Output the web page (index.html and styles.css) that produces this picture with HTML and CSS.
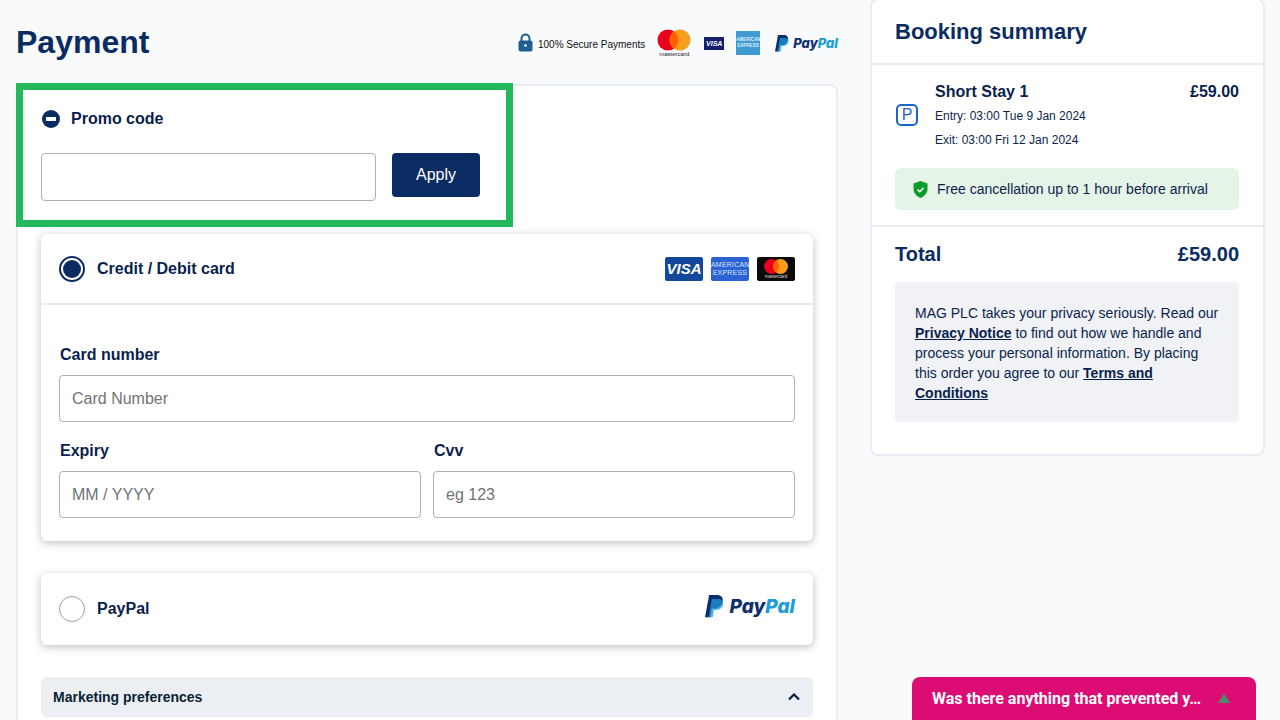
FILE: index.html
```html
<!DOCTYPE html>
<html lang="en">
<head>
    <meta charset="UTF-8">
    <meta name="viewport" content="width=device-width, initial-scale=1.0">
    <title>Payment</title>
    <link rel="stylesheet" href="styles.css">
</head>
<body>
    <div class="page">
        <main class="main-col">
            <div class="pay-header">
                <h1>Payment</h1>
                <div class="secure">
                    <svg class="lock" width="15" height="19" viewBox="0 0 15 19">
                        <path d="M3.500 9V5.500a4 4 0 0 1 8 0V9" fill="none" stroke="#1f5f8f" stroke-width="2"/>
                        <rect x="0.5" y="7.500" width="14" height="11" rx="2" fill="#1f5f8f"/>
                        <circle cx="7.500" cy="12.500" r="1.300" fill="#fff"/>
                    </svg>
                    <span class="secure-text">100% Secure Payments</span>
                    <div class="mc-small">
                        <svg width="34" height="22" viewBox="0 0 34 22">
                            <circle cx="11" cy="11" r="10.500" fill="#eb001b"/>
                            <circle cx="23" cy="11" r="10.500" fill="#f79e1b"/>
                            <path d="M17 2.400a10.500 10.500 0 0 1 0 17.200a10.500 10.500 0 0 1 0-17.200z" fill="#ff5f00"/>
                        </svg>
                        <span>mastercard</span>
                    </div>
                    <span class="visa-small">VISA</span>
                    <span class="amex-small">AMERICAN<br>EXPRESS</span>
                    <div class="paypal-small">
                        <svg width="14" height="17" viewBox="0 0 14 17">
                            <path d="M3 0h5.500C12 0 13.600 2 13 5c-.6 3.200-3 5-6 5H5l-1 6.500H0z" fill="#0a2d6e"/>
                            <path d="M5 3h5c2.500 0 3.800 1.600 3.300 4-.5 2.700-2.600 4-5 4H6.500l-.8 5.500H2.700z" fill="#1c9bd8" opacity=".75"/>
                        </svg>
                        <span class="pp-pay">Pay</span><span class="pp-pal">Pal</span>
                    </div>
                </div>
            </div>

            <section class="pay-card">
                <div class="promo">
                    <div class="promo-title">
                        <span class="minus-icon"></span>
                        <span>Promo code</span>
                    </div>
                    <div class="promo-row">
                        <input class="text-input promo-input" type="text">
                        <button class="apply-btn">Apply</button>
                    </div>
                </div>

                <div class="option">
                    <div class="option-head bordered">
                        <span class="radio checked"></span>
                        <span class="option-name">Credit / Debit card</span>
                        <div class="card-logos">
                            <span class="logo-visa">VISA</span>
                            <span class="logo-amex">AMERICAN<br>EXPRESS</span>
                            <span class="logo-mc">
                                <svg width="26" height="15" viewBox="0 0 26 15">
                                    <circle cx="8.500" cy="7.500" r="7.500" fill="#eb001b"/>
                                    <circle cx="17.500" cy="7.500" r="7.500" fill="#f79e1b"/>
                                    <path d="M13 1.500a7.500 7.500 0 0 1 0 12a7.500 7.500 0 0 1 0-12z" fill="#ff5f00"/>
                                </svg>
                                <span>mastercard</span>
                            </span>
                        </div>
                    </div>
                    <div class="option-body">
                        <label class="field-label">Card number</label>
                        <input class="text-input" type="text" placeholder="Card Number">
                        <div class="field-row">
                            <div class="field">
                                <label class="field-label">Expiry</label>
                                <input class="text-input" type="text" placeholder="MM / YYYY">
                            </div>
                            <div class="field">
                                <label class="field-label">Cvv</label>
                                <input class="text-input" type="text" placeholder="eg 123">
                            </div>
                        </div>
                    </div>
                </div>

                <div class="option paypal-option">
                    <div class="option-head">
                        <span class="radio"></span>
                        <span class="option-name">PayPal</span>
                        <div class="paypal-big">
                            <svg width="19" height="23" viewBox="0 0 14 17">
                                <path d="M3 0h5.500C12 0 13.600 2 13 5c-.6 3.200-3 5-6 5H5l-1 6.500H0z" fill="#0a2d6e"/>
                                <path d="M5 3h5c2.500 0 3.800 1.600 3.300 4-.5 2.700-2.600 4-5 4H6.500l-.8 5.500H2.700z" fill="#1c9bd8" opacity=".75"/>
                            </svg>
                            <span class="pp-pay">Pay</span><span class="pp-pal">Pal</span>
                        </div>
                    </div>
                </div>

                <div class="marketing">
                    <span>Marketing preferences</span>
                    <svg width="12" height="8" viewBox="0 0 12 8">
                        <path d="M1 6.500l5-5 5 5" fill="none" stroke="#0a1f44" stroke-width="2.200"/>
                    </svg>
                </div>
            </section>
        </main>

        <aside class="summary">
            <h2>Booking summary</h2>
            <div class="summary-item">
                <div class="stay">
                    <span class="p-icon">P</span>
                    <div class="stay-info">
                        <div class="stay-top">
                            <strong>Short Stay 1</strong>
                            <strong>£59.00</strong>
                        </div>
                        <p>Entry: 03:00 Tue 9 Jan 2024</p>
                        <p>Exit: 03:00 Fri 12 Jan 2024</p>
                    </div>
                </div>
                <div class="cancel-note">
                    <svg width="15" height="17" viewBox="0 0 15 17">
                        <path d="M7.500 0l7 2.500v5.500c0 4-3 7.200-7 9c-4-1.800-7-5-7-9V2.500z" fill="#0d9b2c"/>
                        <path d="M4.500 8.500l2.200 2.200 3.800-3.800" fill="none" stroke="#fff" stroke-width="1.500"/>
                    </svg>
                    <span>Free cancellation up to 1 hour before arrival</span>
                </div>
            </div>
            <div class="summary-total">
                <div class="total-row">
                    <span>Total</span>
                    <span>£59.00</span>
                </div>
                <div class="privacy">
                    <p>MAG PLC takes your privacy seriously. Read our</p>
                    <p><a href="#">Privacy Notice</a> to find out how we handle and</p>
                    <p>process your personal information. By placing</p>
                    <p>this order you agree to our <a href="#">Terms and</a></p>
                    <p><a href="#">Conditions</a></p>
                </div>
            </div>
        </aside>
    </div>

    <div class="feedback">
        <span>Was there anything that prevented y…</span>
        <span class="feedback-arrow"></span>
    </div>
</body>
</html>
```

FILE: styles.css
```css
* {
    box-sizing: border-box;
}
html, body {
    height: 720px;
    overflow: hidden;
}
body {
    margin: 0;
    background-color: #f8fafc;
    color: #0a1f4d;
    font-family: "Liberation Sans", Arial, sans-serif;
}
.page {
    display: flex;
    align-items: flex-start;
    gap: 32px;
    padding-left: 16px;
}
.main-col {
    width: 822px;
    flex-shrink: 0;
}
.pay-header {
    display: flex;
    justify-content: space-between;
    align-items: center;
    height: 84px;
}
h1 {
    margin: 0;
    font-size: 32px;
    font-weight: 700;
    color: #0b2c63;
}
.secure {
    display: flex;
    align-items: center;
    padding-top: 2px;
}
.secure-text {
    margin: 3px 0 0 5px;
    font-size: 10px;
    color: #111;
}
.lock {
    margin-bottom: 2px;
}
.mc-small {
    display: flex;
    flex-direction: column;
    align-items: center;
    margin-left: 12px;
    color: #222;
    font-size: 6px;
    line-height: 6px;
}
.visa-small {
    margin-left: 13px;
    width: 20px;
    height: 13px;
    background-color: #14206e;
    color: #fff;
    font-size: 7px;
    font-weight: 700;
    font-style: italic;
    line-height: 13px;
    text-align: center;
}
.amex-small {
    margin-left: 12px;
    width: 24px;
    height: 24px;
    padding-top: 6px;
    background-color: #3f9bd1;
    color: #d9eef8;
    font-size: 4.500px;
    font-weight: 700;
    line-height: 6px;
    text-align: center;
}
.paypal-small {
    display: flex;
    align-items: center;
    margin-left: 15px;
    font-family: Inter, sans-serif;
    font-size: 13px;
    font-weight: 800;
    font-style: italic;
}
.paypal-small svg {
    margin-right: 4px;
}
.pp-pay {
    color: #0f2f6e;
}
.pp-pal {
    color: #1c9bd8;
}

.pay-card {
    height: 636px;
    background-color: #fff;
    border: 2px solid #e8edf4;
    border-bottom: none;
    border-radius: 8px 8px 0 0;
    padding: 0 23px;
}
.promo {
    width: 497px;
    height: 144px;
    margin: -3px 0 0 -25px;
    padding: 19px 0 0 18px;
    border: 7px solid #22b95c;
    background-color: #fff;
}
.promo-title {
    display: flex;
    align-items: center;
    gap: 11px;
    padding-left: 1px;
    font-size: 16px;
    font-weight: 700;
    line-height: 19px;
}
.minus-icon {
    position: relative;
    width: 18px;
    height: 18px;
    border-radius: 50%;
    background-color: #0b2c63;
}
.minus-icon::after {
    content: "";
    position: absolute;
    left: 4px;
    top: 7px;
    width: 10px;
    height: 4px;
    background-color: #fff;
}
.promo-row {
    display: flex;
    align-items: flex-start;
    gap: 16px;
    margin-top: 25px;
}
.text-input {
    display: block;
    width: 100%;
    height: 47px;
    padding: 1px 12px 0;
    border: 1px solid #adb0b4;
    border-radius: 4px;
    background-color: #fff;
    font-family: inherit;
    font-size: 16px;
}
.text-input::placeholder {
    color: #6f7378;
    opacity: 1;
}
.promo-input {
    width: 335px;
    height: 48px;
}
.apply-btn {
    width: 88px;
    height: 44px;
    border: none;
    border-radius: 4px;
    background-color: #0b2c63;
    color: #fff;
    font-family: inherit;
    font-size: 16px;
}

.option {
    margin-top: 7px;
    height: 307px;
    background-color: #fff;
    border-radius: 6px;
    box-shadow: 0 2px 8px rgba(0, 0, 0, 0.25);
}
.option-head {
    display: flex;
    align-items: center;
    height: 71px;
    padding: 0 18px;
}
.option-head.bordered {
    border-bottom: 2px solid #e8eaed;
}
.radio {
    width: 26px;
    height: 26px;
    flex-shrink: 0;
    border: 1px solid #9a9ea3;
    border-radius: 50%;
    background-color: #fff;
}
.radio.checked {
    border: 2px solid #0b2c63;
    padding: 2px;
    background-color: #0b2c63;
    background-clip: content-box;
}
.option-name {
    margin-left: 12px;
    font-size: 16px;
    font-weight: 700;
}
.card-logos {
    display: flex;
    gap: 8px;
    margin-left: auto;
}
.logo-visa,
.logo-amex,
.logo-mc {
    width: 38px;
    height: 24px;
    border-radius: 2px;
    text-align: center;
}
.logo-visa {
    background-color: #12479c;
    color: #fff;
    font-size: 15px;
    font-weight: 700;
    font-style: italic;
    line-height: 24px;
}
.logo-amex {
    padding-top: 4px;
    background-color: #2b62d4;
    color: #dbe6fb;
    font-size: 7px;
    letter-spacing: 0.2px;
    line-height: 8px;
}
.logo-mc {
    display: flex;
    flex-direction: column;
    align-items: center;
    padding-top: 2px;
    background-color: #0a0a0a;
    color: #ddd;
    font-size: 4.500px;
    line-height: 5px;
}
.option-body {
    padding: 40px 18px 0;
}
.field-label {
    display: block;
    margin: 0 0 11px 1px;
    font-size: 16px;
    font-weight: 700;
    line-height: 19px;
}
.field-row {
    display: flex;
    gap: 12px;
    margin-top: 19px;
}
.field {
    flex: 1;
}
.paypal-option {
    margin-top: 32px;
    height: 72px;
}
.paypal-option .option-head {
    height: 72px;
}
.paypal-big {
    display: flex;
    align-items: center;
    margin: -6px 0 0 auto;
    font-family: Inter, sans-serif;
    font-size: 19px;
    font-weight: 800;
    font-style: italic;
}
.paypal-big svg {
    margin-right: 6px;
}
.marketing {
    display: flex;
    justify-content: space-between;
    align-items: center;
    height: 40px;
    margin-top: 32px;
    padding: 0 13px 0 12px;
    background-color: #ebeff3;
    border-radius: 6px;
    font-size: 14px;
    font-weight: 700;
    color: #0a1f33;
}

.summary {
    width: 395px;
    height: 458px;
    margin-top: -2px;
    background-color: #fff;
    border: 2px solid #e8edf4;
    border-radius: 8px;
}
h2 {
    margin: 0;
    height: 65px;
    padding: 18px 23px 0;
    font-size: 22px;
    font-weight: 700;
    line-height: 28px;
    color: #0b2c63;
    border-bottom: 2px solid #e8edf4;
}
.summary-item {
    height: 162px;
    padding: 16px 24px 0 23px;
    border-bottom: 2px solid #e8edf4;
}
.stay {
    display: flex;
    align-items: center;
}
.p-icon {
    width: 22px;
    height: 22px;
    margin-left: 1px;
    flex-shrink: 0;
    border: 2px solid #1b66c9;
    border-radius: 5px;
    color: #1b66c9;
    font-size: 16px;
    line-height: 18px;
    text-align: center;
}
.stay-info {
    flex: 1;
    margin-left: 17px;
}
.stay-top {
    display: flex;
    justify-content: space-between;
    font-size: 16px;
    line-height: 22px;
}
.stay-top strong {
    font-weight: 700;
}
.stay-info p {
    margin: 0;
    padding-top: 4px;
    font-size: 12px;
    line-height: 18px;
}
.stay-info p + p {
    padding-top: 6px;
}
.cancel-note {
    display: flex;
    align-items: center;
    gap: 9px;
    height: 42px;
    margin-top: 19px;
    padding-left: 18px;
    background-color: #e6f3e7;
    border-radius: 6px;
    font-size: 14px;
}
.summary-total {
    padding: 14px 24px 0 23px;
}
.total-row {
    display: flex;
    justify-content: space-between;
    font-size: 20px;
    font-weight: 700;
    line-height: 26px;
    color: #0b2c63;
}
.privacy {
    height: 140px;
    margin-top: 15px;
    padding: 21px 20px 0;
    background-color: #f0f2f5;
    border-radius: 4px;
    font-size: 14px;
    line-height: 20px;
}
.privacy p {
    margin: 0;
}
.privacy a {
    font-weight: 700;
    color: #0a1f4d;
}

.feedback {
    position: fixed;
    left: 912px;
    top: 677px;
    display: flex;
    align-items: center;
    width: 344px;
    height: 43px;
    padding: 0 0 1px 20px;
    background-color: #dc0c74;
    border-radius: 8px 8px 0 0;
    color: #fff;
    font-family: Roboto, Arial, sans-serif;
    font-size: 16px;
    font-weight: 700;
}
.feedback-arrow {
    margin-left: 17px;
    border-left: 6px solid transparent;
    border-right: 6px solid transparent;
    border-bottom: 10px solid #4f8a6b;
}
```
